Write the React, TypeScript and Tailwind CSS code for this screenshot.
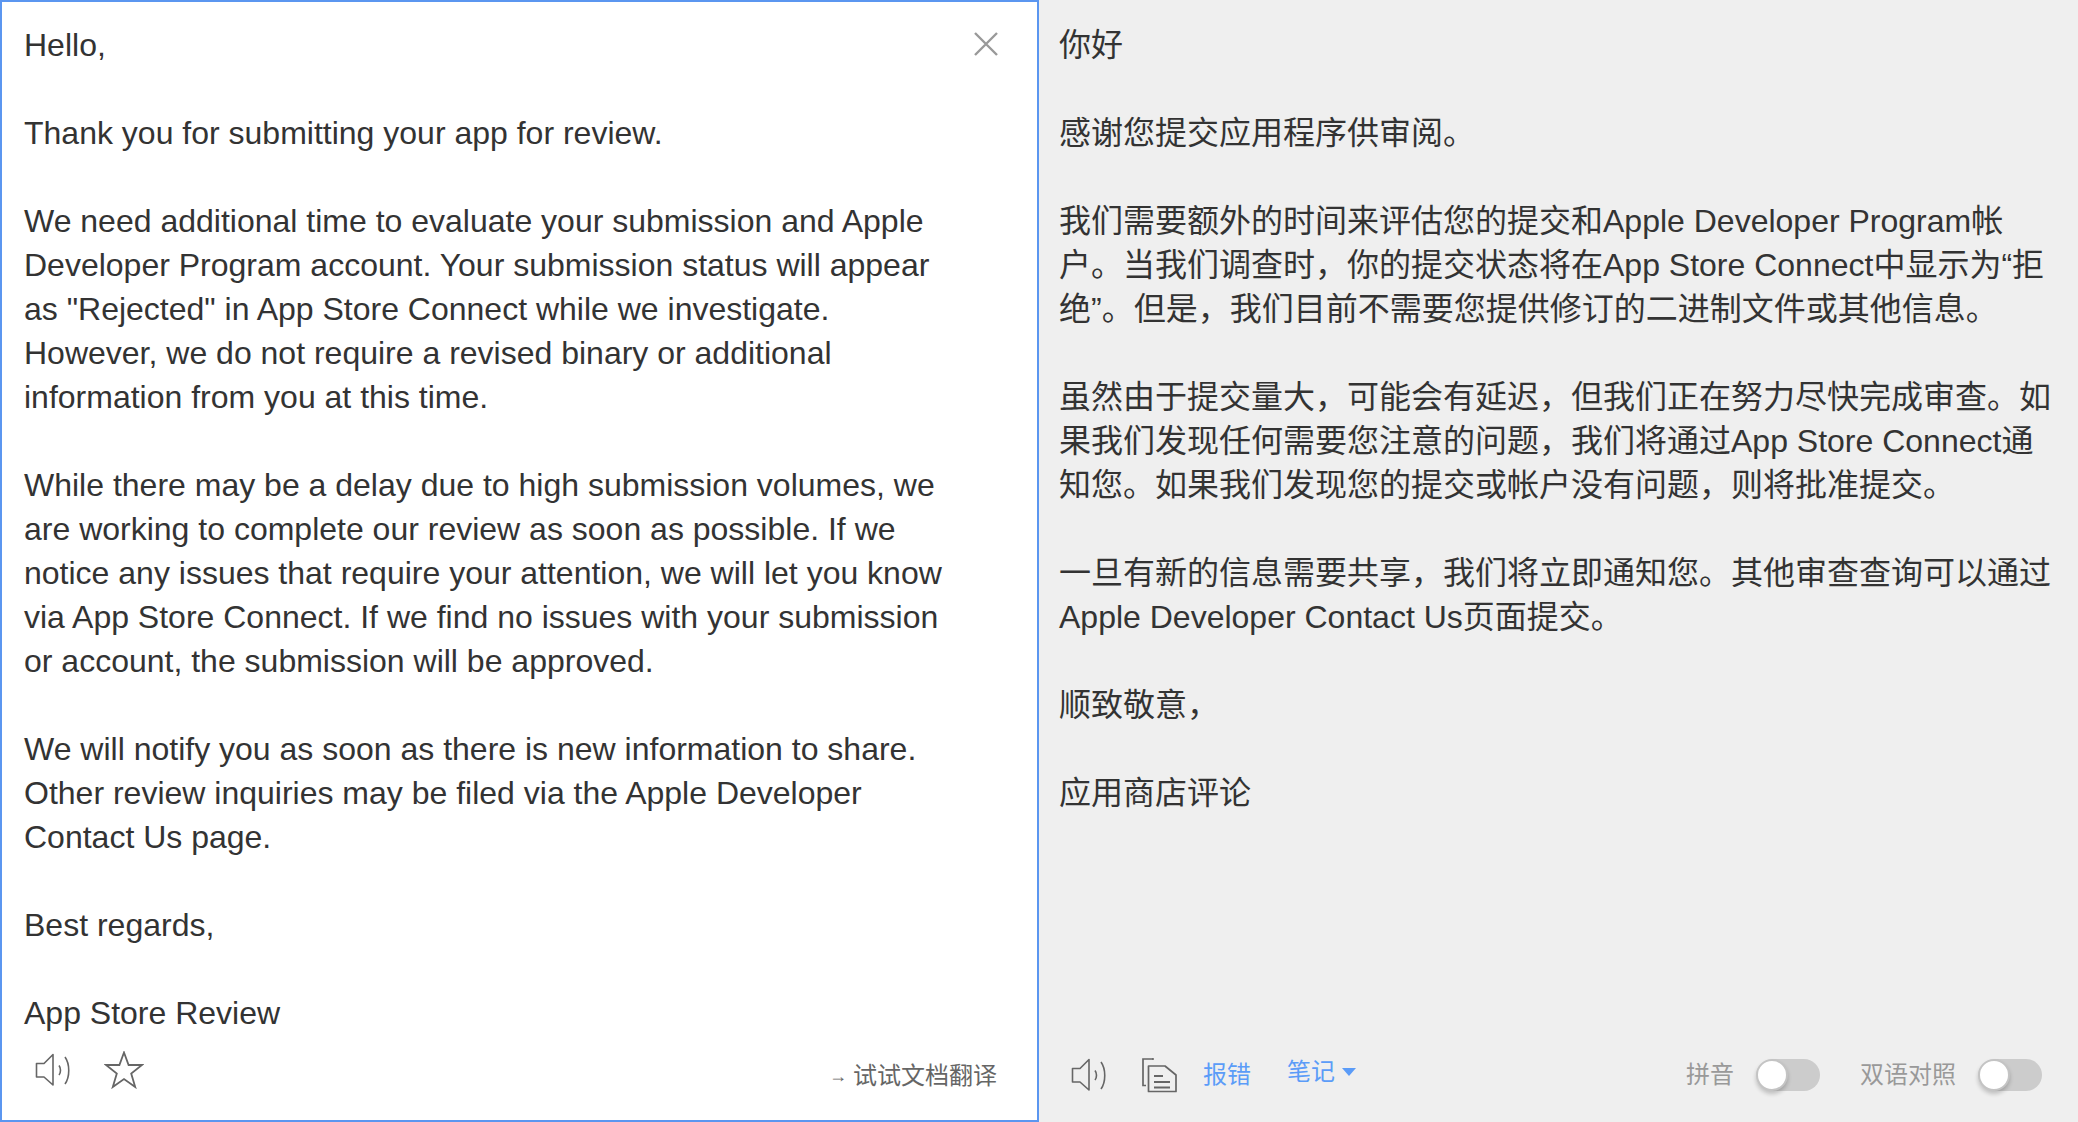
const en = [
  "Hello,", "", "Thank you for submitting your app for review.", "",
  "We need additional time to evaluate your submission and Apple",
  "Developer Program account. Your submission status will appear",
  'as "Rejected" in App Store Connect while we investigate.',
  "However, we do not require a revised binary or additional",
  "information from you at this time.", "",
  "While there may be a delay due to high submission volumes, we",
  "are working to complete our review as soon as possible. If we",
  "notice any issues that require your attention, we will let you know",
  "via App Store Connect. If we find no issues with your submission",
  "or account, the submission will be approved.", "",
  "We will notify you as soon as there is new information to share.",
  "Other review inquiries may be filed via the Apple Developer",
  "Contact Us page.", "", "Best regards,", "", "App Store Review",
];
const zh = [
  "你好", "", "感谢您提交应用程序供审阅。", "",
  "我们需要额外的时间来评估您的提交和Apple Developer Program帐",
  "户。当我们调查时，你的提交状态将在App Store Connect中显示为“拒",
  "绝”。但是，我们目前不需要您提供修订的二进制文件或其他信息。", "",
  "虽然由于提交量大，可能会有延迟，但我们正在努力尽快完成审查。如",
  "果我们发现任何需要您注意的问题，我们将通过App Store Connect通",
  "知您。如果我们发现您的提交或帐户没有问题，则将批准提交。", "",
  "一旦有新的信息需要共享，我们将立即通知您。其他审查查询可以通过",
  "Apple Developer Contact Us页面提交。", "", "顺致敬意，", "", "应用商店评论",
];

function Speaker() {
  return (
    <svg width="40" height="36" viewBox="0 0 40 36" fill="none" stroke="#666" strokeWidth="1.6">
      <path d="M1.5 11.5H9L18 2.5V33L9 25H1.5Z" strokeLinejoin="round" />
      <path d="M24 13.5C26 16 26 20.5 24 23" />
      <path d="M30 5C35 12 35 25 30 32" />
    </svg>
  );
}

function Star() {
  return (
    <svg width="40" height="38" viewBox="0 0 40 38" fill="none" stroke="#666" strokeWidth="1.8" strokeLinejoin="miter">
      <path d="M20 1.5L24.6 14H38L27.2 22.5L31.2 36L20 28L8.8 36L12.8 22.5L2 14H15.4Z" />
    </svg>
  );
}

function Copy() {
  return (
    <svg width="38" height="36" viewBox="0 0 38 36" fill="none" stroke="#666" strokeWidth="1.7">
      <path d="M12 2H2V28.5H5" />
      <path d="M12 2H11" />
      <path d="M13 2H12M7.5 9H24L35 18V34.5H7.5V9Z" strokeLinejoin="round" />
      <path d="M13 19H22M13 25H29M13 30.5H29" strokeWidth="2" />
    </svg>
  );
}

function Toggle() {
  return (
    <span className="relative block h-[32px] w-[64px]">
      <span className="absolute right-0 top-0 h-[32px] w-[48px] rounded-r-[16px] bg-[#cccccc]" />
      <span className="absolute left-0 top-0 h-[32px] w-[32px] rounded-full border-2 border-[#c4c4c4] bg-white shadow-[0_3px_4px_rgba(0,0,0,0.2)]" />
    </span>
  );
}

export default function App() {
  return (
    <div className="flex h-[1122px] w-[2078px] font-['Liberation_Sans','Noto_Sans_CJK_SC',sans-serif] text-[32px] leading-[44px] text-[#333333]">
      <div className="relative flex h-full w-[1039px] shrink-0 flex-col justify-between border-2 border-[#5b96f0] bg-white">
        <div className="whitespace-nowrap pl-[22px] pt-[21px]">
          {en.map((l, i) => (
            <div key={i} className="h-[44px]">{l}</div>
          ))}
        </div>
        <svg className="absolute right-[38px] top-[29px]" width="26" height="26" viewBox="0 0 26 26" stroke="#999" strokeWidth="2.4">
          <path d="M2 2L24 24M24 2L2 24" />
        </svg>
        <div className="flex items-center justify-between pb-[28px] pl-[33px] pr-[40px]">
          <div className="flex items-center gap-[29px]">
            <Speaker />
            <Star />
          </div>
          <div className="mt-[12px] flex items-center gap-[6px] text-[24px] leading-[32px] text-[#666666]">
            <span className="text-[18px]">→</span>
            <span>试试文档翻译</span>
          </div>
        </div>
      </div>
      <div className="flex h-full flex-1 flex-col justify-between bg-[#efefef]">
        <div className="whitespace-nowrap pl-[20px] pt-[23px]">
          {zh.map((l, i) => (
            <div key={i} className="h-[44px]">{l}</div>
          ))}
        </div>
        <div className="flex items-center justify-between pb-[28px] pl-[32px] pr-[36px]">
          <div className="flex items-center">
            <Speaker />
            <span className="ml-[30px]"><Copy /></span>
            <span className="ml-[24px] text-[24px] leading-[32px] text-[#5b9cf8]">报错</span>
            <span className="ml-[36px] mb-[6px] flex items-center gap-[7px] text-[24px] leading-[32px] text-[#5b9cf8]">
              笔记
              <span className="h-0 w-0 border-x-[7px] border-t-[8px] border-x-transparent border-t-[#5b9cf8]" />
            </span>
          </div>
          <div className="flex items-center text-[24px] leading-[32px] text-[#999999]">
            <span>拼音</span>
            <span className="ml-[22px]"><Toggle /></span>
            <span className="ml-[40px]">双语对照</span>
            <span className="ml-[22px]"><Toggle /></span>
          </div>
        </div>
      </div>
    </div>
  );
}
